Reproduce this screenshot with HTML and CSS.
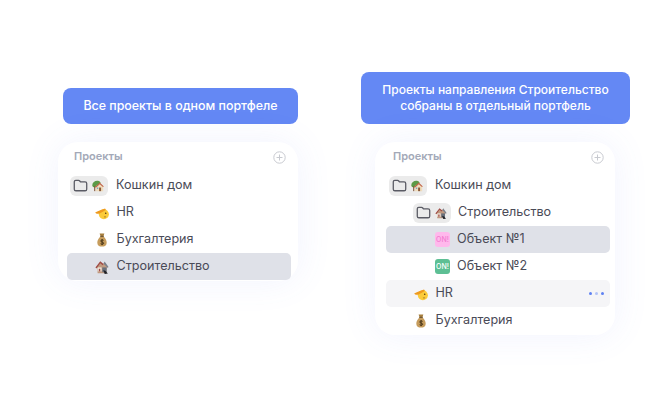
FILE: index.html
```html
<!doctype html>
<html lang="ru">
<head>
  <meta charset="utf-8">
  <title>Портфели проектов</title>
  <link rel="stylesheet" href="styles.css">
</head>
<body>
  <svg class="defs" width="0" height="0">
    <symbol id="folder" viewBox="0 0 14 14">
      <path d="M1.200 3.600c0-.9.6-1.400 1.400-1.400h2.600c.5 0 .8.2 1.100.6l.7.9h4.300c.9 0 1.500.6 1.500 1.500v5.200c0 .9-.6 1.500-1.500 1.500H2.700c-.9 0-1.500-.6-1.500-1.500z" fill="none" stroke="#5a5b64" stroke-width="1.200"/>
    </symbol>
    <symbol id="treehouse" viewBox="0 0 14 14">
      <path d="M.3 6C.5 2.500 4 .5 6.800 1c1.900.3 3 1.300 3.300 2.500L5.500 7.500 3.500 8.500C2 8.500.3 7.800.3 6z" fill="#5c9a48"/>
      <rect x="2.600" y="7.500" width="1.200" height="5.500" fill="#7a4a2c"/>
      <path d="M4.500 7.200V13h8.500V7.200L9.200 3.800z" fill="#f0dcbc"/>
      <path d="M3.500 8.300 9.100 2.800l4.700 4.700-1 .8-3.700-3.400-4.600 4.200z" fill="#c0654a"/>
      <rect x="8.300" y="8.800" width="2.300" height="4.200" fill="#8a5a38"/>
      <rect x="5.700" y="8.800" width="1.600" height="1.600" fill="#6aa5c9"/>
    </symbol>
    <symbol id="ruin" viewBox="0 0 16 16">
      <path d="M1.500 8.500 6 2.500l3 2.500 1.500-2.500 4 5.500-1 1-.5 6H3l-.4-5.800z" fill="#c09a80"/>
      <path d="M.5 8.500 6 1.500l3.800 3.200-1 1.300L6 3.700 1.800 9.700z" fill="#a04a44"/>
      <path d="M9.800 4.500 11 1.800 15.500 8l-1 .9-3.400-3.600z" fill="#7a808c"/>
      <rect x="3" y="8.500" width="4.500" height="4.500" fill="#f3ebe0"/>
      <rect x="4.300" y="10" width="1.800" height="3" fill="#a04a44"/>
      <rect x="8.300" y="8.500" width="5" height="5.500" fill="#68707c"/>
      <path d="M9.500 11.500l2.600 1.100 2.600 2.900-3.600.4z" fill="#1f2126"/>
    </symbol>
    <symbol id="salute" viewBox="0 0 15 15">
      <circle cx="9.500" cy="8.800" r="5.400" fill="#fbcb3a"/>
      <path d="M.2 6.900C3 5.500 6.500 4.300 10.800 2.600l.8 1.700C9 5.800 6.500 7 5 8.100 3 8.800.8 8.300.2 6.900z" fill="#ee9a1f"/>
      <circle cx="11.500" cy="7.800" r=".8" fill="#4c3212"/>
      <path d="M9.600 11.700h2.300" stroke="#8a5a18" stroke-width=".7"/>
    </symbol>
    <symbol id="bag" viewBox="0 0 14 14">
      <path d="M4.600.4h4.800L8.400 3.200H5.600z" fill="#a8803f"/>
      <path d="M5.700 3.400h2.600c2.300 1.600 3.400 4 3.400 6.300 0 2.800-2 3.900-4.700 3.900S2.300 12.500 2.300 9.700c0-2.300 1.100-4.700 3.400-6.300z" fill="#c69c5c"/>
      <rect x="5.200" y="2.800" width="3.600" height="1" fill="#5d4320"/>
      <path d="M8.600 7.400C8 6.700 5.700 6.700 5.700 8c0 1.400 3 .8 3 2.200 0 1.300-2.400 1.200-3.100.5M7.100 6.100v6" fill="none" stroke="#3d2b12" stroke-width=".9"/>
    </symbol>
  </svg>

  <main class="board">
    <div class="banner banner-left">Все проекты в одном портфеле</div>
    <div class="banner banner-right">Проекты направления Строительство<br>собраны в отдельный портфель</div>

    <section class="card card-left">
      <header class="card-head">
        <span class="card-title">Проекты</span>
        <svg class="add" viewBox="0 0 13 13"><circle cx="6.500" cy="6.500" r="5.700"/><path d="M6.500 3.500v6M3.500 6.500h6"/></svg>
      </header>
      <div class="row folder-row">
        <span class="pill"><svg class="ico-folder"><use href="#folder"/></svg><svg class="ico"><use href="#treehouse"/></svg></span>
        <span class="label">Кошкин дом</span>
      </div>
      <div class="row leaf"><svg class="emoji"><use href="#salute"/></svg><span class="label">HR</span></div>
      <div class="row leaf"><svg class="emoji"><use href="#bag"/></svg><span class="label">Бухгалтерия</span></div>
      <div class="row leaf selected"><svg class="emoji"><use href="#ruin"/></svg><span class="label">Строительство</span></div>
    </section>

    <section class="card card-right">
      <header class="card-head">
        <span class="card-title">Проекты</span>
        <svg class="add" viewBox="0 0 13 13"><circle cx="6.500" cy="6.500" r="5.700"/><path d="M6.500 3.500v6M3.500 6.500h6"/></svg>
      </header>
      <div class="row folder-row">
        <span class="pill"><svg class="ico-folder"><use href="#folder"/></svg><svg class="ico"><use href="#treehouse"/></svg></span>
        <span class="label">Кошкин дом</span>
      </div>
      <div class="row folder-row nested">
        <span class="pill"><svg class="ico-folder"><use href="#folder"/></svg><svg class="ico"><use href="#ruin"/></svg></span>
        <span class="label">Строительство</span>
      </div>
      <div class="row sub selected"><span class="on on-pink">ON!</span><span class="label">Объект №1</span></div>
      <div class="row sub"><span class="on on-green">ON!</span><span class="label">Объект №2</span></div>
      <div class="row leaf hover">
        <svg class="emoji"><use href="#salute"/></svg><span class="label">HR</span>
        <span class="dots"><i></i><i class="dim"></i><i></i></span>
      </div>
      <div class="row leaf"><svg class="emoji"><use href="#bag"/></svg><span class="label">Бухгалтерия</span></div>
    </section>
  </main>
</body>
</html>
```

FILE: styles.css
```css
* {
    box-sizing: border-box;
}
body {
    margin: 0;
    width: 670px;
    height: 408px;
    overflow: hidden;
    background: #fff;
    font-family: "Inter", "Noto Sans", sans-serif;
}
.defs {
    display: block;
    height: 0;
}
.board {
    display: grid;
    grid-template-columns: 240px 240px;
    grid-template-rows: 52px auto;
    column-gap: 77px;
    row-gap: 18px;
    padding: 72px 0 0 58px;
}
.banner {
    background: #6488f4;
    border-radius: 8px;
    color: #fff;
    font-weight: 500;
    line-height: 16px;
    text-align: center;
    align-self: end;
    display: flex;
    align-items: center;
    justify-content: center;
}
.banner-left {
    height: 36px;
    margin-left: 5px;
    font-size: 12.400px;
}
.banner-right {
    height: 52px;
    margin: 0 -15px 0 -14px;
    font-size: 12px;
}
.card {
    align-self: start;
    background: #fff;
    border-radius: 20px;
    box-shadow: 0 0 36px rgba(100, 120, 240, 0.09);
    color: #4a4b57;
    font-size: 12.600px;
}
.card-left {
    padding: 0 7px 1px 9px;
}
.card-right {
    padding: 0 5px 1px 11px;
}
.card-head {
    height: 30px;
    display: flex;
    align-items: center;
    justify-content: space-between;
    padding: 0 5px 2px 7px;
}
.card-right .card-head {
    padding-right: 6px;
}
.card-title {
    color: #a3a9b8;
    font-size: 11px;
    font-weight: 600;
}
.add {
    width: 13px;
    height: 13px;
    margin-top: 2px;
    fill: none;
    stroke: #c8cad0;
    stroke-width: 1;
}
.row {
    height: 27px;
    border-radius: 5px;
    display: flex;
    align-items: center;
}
.label {
    margin-bottom: 2px;
}
.folder-row {
    padding-left: 3px;
    gap: 8px;
}
.nested {
    padding-left: 27px;
    gap: 7px;
}
.pill {
    width: 38px;
    height: 20px;
    background: #ebebeb;
    border-radius: 6px;
    display: flex;
    align-items: center;
    gap: 3.500px;
    padding-left: 3px;
}
.ico-folder {
    width: 15px;
    height: 15px;
    flex: none;
}
.ico {
    width: 12px;
    height: 12px;
    flex: none;
}
.leaf {
    padding-left: 28px;
    gap: 7.500px;
}
.sub {
    padding-left: 49px;
    gap: 7px;
}
.emoji {
    width: 14px;
    height: 14px;
    flex: none;
}
.selected {
    background: #dfe1e8;
}
.hover {
    background: #f5f5f7;
}
.on {
    width: 15px;
    height: 15px;
    border-radius: 3px;
    font-size: 7px;
    font-weight: 500;
    display: flex;
    align-items: center;
    justify-content: center;
    flex: none;
}
.on-pink {
    background: #ffb8ec;
    color: #f27ccf;
}
.on-green {
    background: #5dbf94;
    color: #fff;
}
.dots {
    margin-left: auto;
    margin-right: 6px;
    display: flex;
    gap: 2.500px;
}
.dots i {
    width: 3.500px;
    height: 3.500px;
    border-radius: 50%;
    background: #5f82f2;
}
.dots .dim {
    background: #b3c3f6;
}
```
